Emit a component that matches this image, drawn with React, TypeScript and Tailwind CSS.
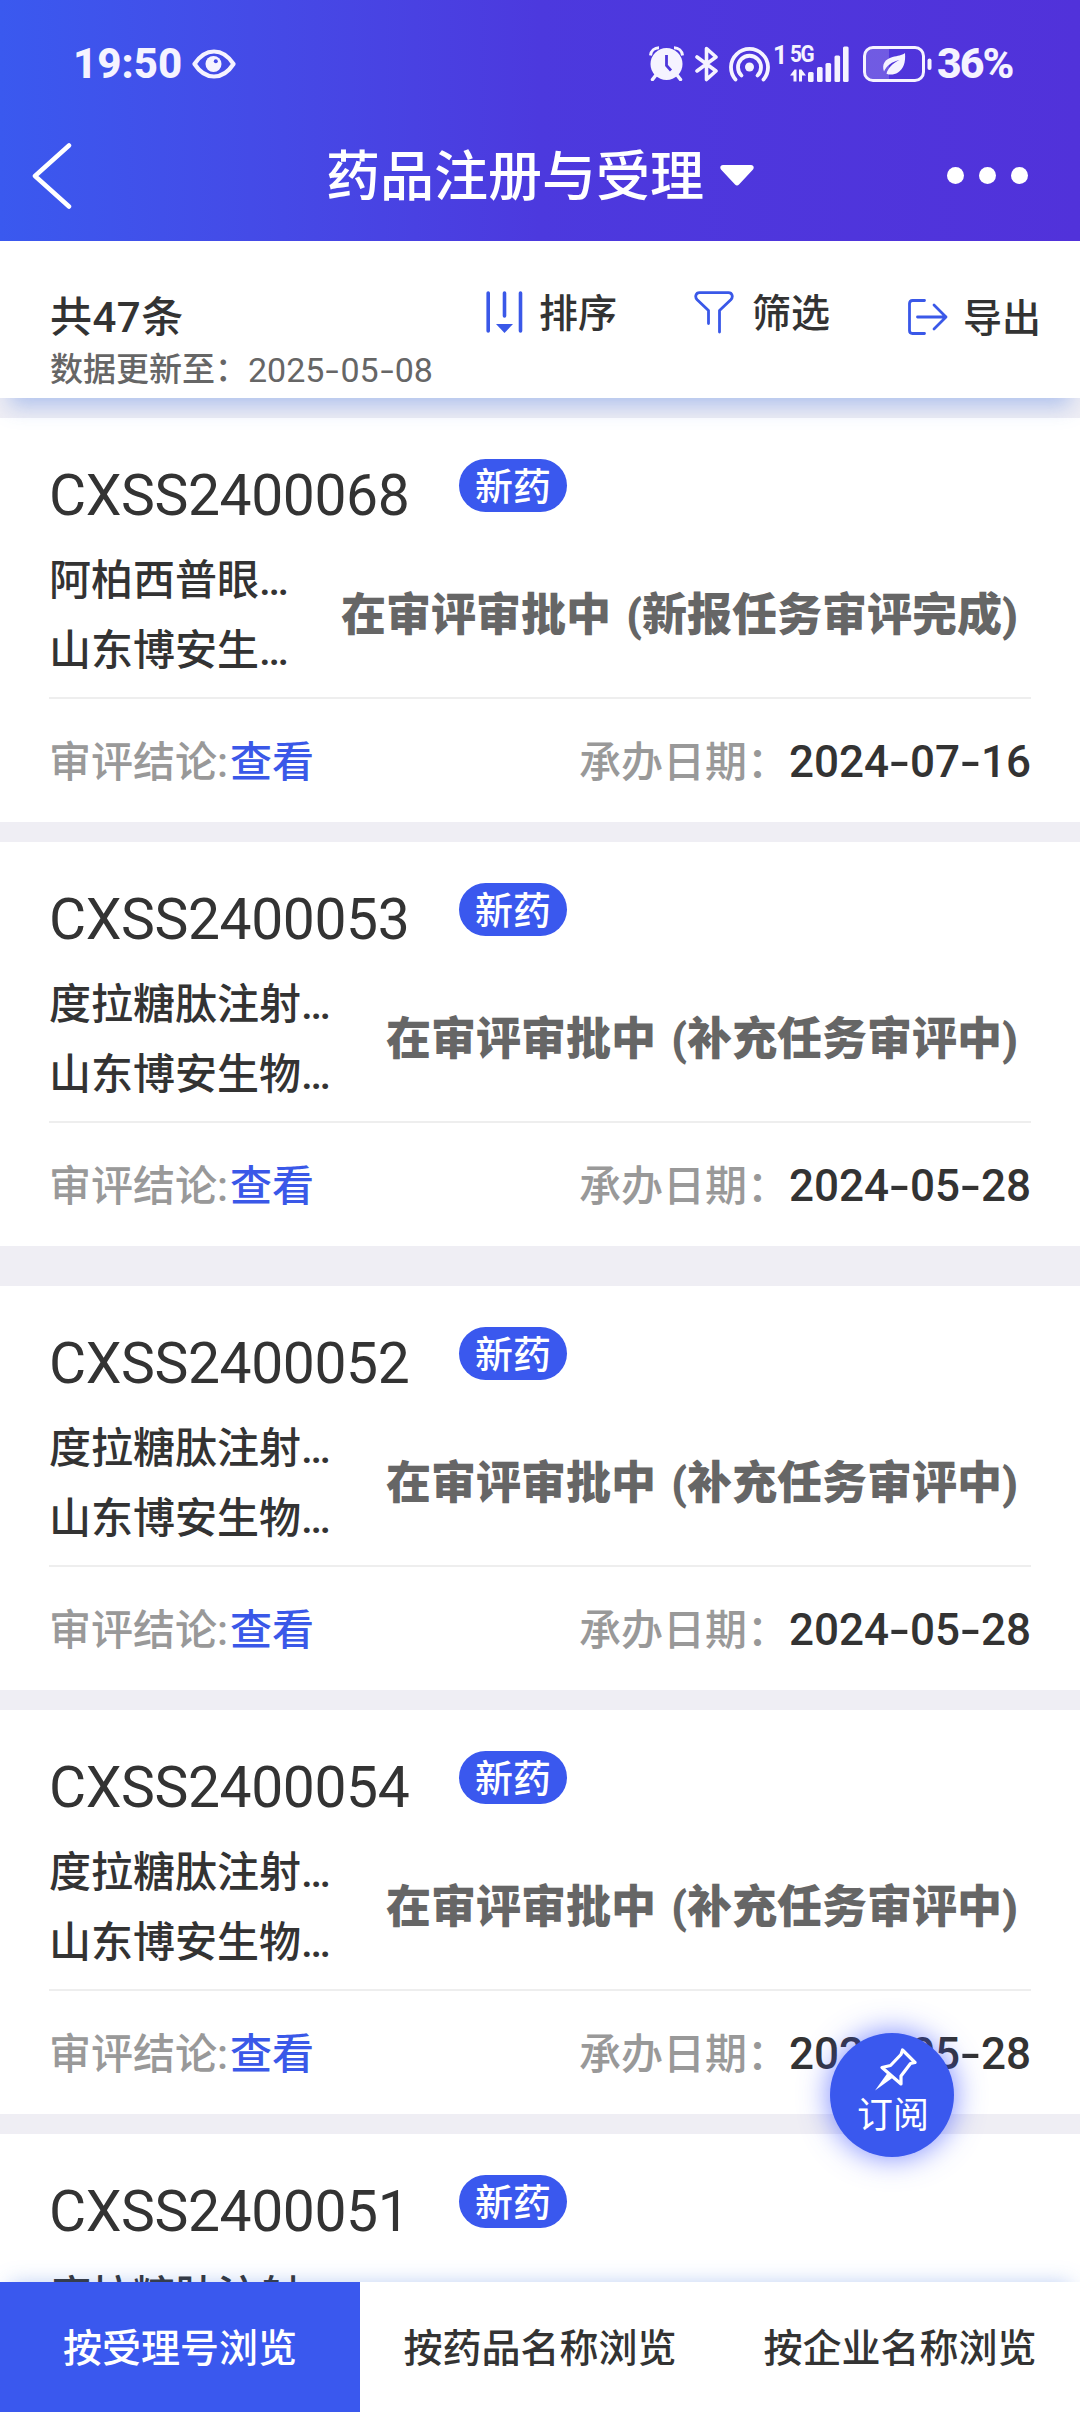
import React from 'react';
import clsx from 'clsx';

type Item = {
  code: string;
  name: string;
  company: string;
  status: string;
  date: string;
};

const items: Item[] = [
  { code: 'CXSS2400068', name: '阿柏西普眼…', company: '山东博安生…', status: '在审评审批中 (新报任务审评完成)', date: '2024-07-16' },
  { code: 'CXSS2400053', name: '度拉糖肽注射…', company: '山东博安生物…', status: '在审评审批中 (补充任务审评中)', date: '2024-05-28' },
  { code: 'CXSS2400052', name: '度拉糖肽注射…', company: '山东博安生物…', status: '在审评审批中 (补充任务审评中)', date: '2024-05-28' },
  { code: 'CXSS2400054', name: '度拉糖肽注射…', company: '山东博安生物…', status: '在审评审批中 (补充任务审评中)', date: '2024-05-28' },
  { code: 'CXSS2400051', name: '度拉糖肽注射…', company: '山东博安生物…', status: '在审评审批中 (补充任务审评中)', date: '2024-05-28' },
];

const tabs = ['按受理号浏览', '按药品名称浏览', '按企业名称浏览'];

function EyeIcon() {
  return (
    <svg width="44" height="30" viewBox="0 0 44 30" fill="none">
      <path d="M2.500 15C8 6.500 14.500 2.500 22 2.500S36 6.500 41.500 15C36 23.500 29.500 27.500 22 27.500S8 23.500 2.500 15Z" stroke="currentColor" strokeWidth="4.200" strokeLinejoin="round" />
      <circle cx="21.500" cy="15" r="8" fill="currentColor" />
      <circle cx="23.800" cy="12.300" r="2" fill="#4349e6" />
    </svg>
  );
}

function AlarmIcon() {
  return (
    <svg width="35" height="35" viewBox="0 0 35 35" fill="none" stroke="currentColor">
      <path d="M1.500 9.500C2 5 5.500 1.800 10 1.800M33.500 9.500C33 5 29.500 1.800 25 1.800" strokeWidth="3" />
      <path d="M7 29 3.500 33.500M28 29l3.500 4.500" strokeWidth="3.500" strokeLinecap="round" />
      <circle cx="17.500" cy="18" r="16" fill="currentColor" stroke="none" />
      <path d="M17.500 9v10.500l4.500 5" stroke="#4e37db" strokeWidth="2.800" />
    </svg>
  );
}

function BluetoothIcon() {
  return (
    <svg width="24" height="36" viewBox="0 0 24 36" fill="none" stroke="currentColor" strokeWidth="3.600" strokeLinejoin="round" strokeLinecap="round">
      <path d="M2 11l19 14-9.500 8.500V2.500L21 11 2 25" />
    </svg>
  );
}

function HotspotIcon() {
  return (
    <svg width="41" height="36" viewBox="0 0 41 36" fill="none" stroke="currentColor" strokeWidth="3.800" strokeLinecap="round">
      <circle cx="20.500" cy="21" r="4.500" fill="currentColor" stroke="none" />
      <path d="M6.500 33.500A18.500 18.500 0 1 1 34.500 33.500" />
      <path d="M12.500 29.500A11.500 11.500 0 1 1 28.500 29.500" />
    </svg>
  );
}

function SignalIcon() {
  return (
    <svg width="60" height="36" viewBox="0 0 60 36" fill="currentColor">
      <path d="M0 29.500 4.500 23.500H6.500V35.500H3.500V29.500zM9 35.500V23.500h2.500l4.500 6h-4v6z" />
      <rect x="18" y="26" width="5.600" height="10" rx="1.500" />
      <rect x="27" y="21" width="5.600" height="15" rx="1.500" />
      <rect x="35.500" y="17" width="5.600" height="19" rx="1.500" />
      <rect x="44.500" y="9.500" width="5.600" height="26.500" rx="1.500" />
      <rect x="53" y="0.500" width="5.600" height="35.500" rx="1.500" />
    </svg>
  );
}

function BatteryIcon() {
  return (
    <svg width="69" height="36" viewBox="0 0 69 36" fill="none">
      <path d="M26 3H10a7 7 0 0 0-7 7v16a7 7 0 0 0 7 7h16z" fill="currentColor" fillOpacity="0.200" />
      <rect x="1.500" y="1.500" width="59" height="33" rx="8.500" stroke="currentColor" strokeWidth="3" />
      <rect x="64.500" y="12.500" width="4" height="11.500" rx="2" fill="currentColor" />
      <path d="M42 7c.8 9.500-1.500 16-7 19.500-4 2.400-8 2.600-11.500 1.200C25 22 29.500 17.500 36.500 14 29 15.500 23.500 20 21 25.500c-2.500-7 1-12.500 8.500-14.500C35 9.700 38.500 9.700 42 7Z" fill="currentColor" />
    </svg>
  );
}

function SortIcon() {
  return (
    <svg width="37" height="42" viewBox="0 0 37 42" fill="none" stroke="#3a58e8" strokeWidth="3.600" strokeLinecap="round">
      <path d="M2.200 2v38M18.500 2v23M34.500 2v38" />
      <path d="M10 33h17l-8.500 9z" fill="#3a58e8" stroke="none" />
    </svg>
  );
}

function FilterIcon() {
  return (
    <svg width="40" height="43" viewBox="0 0 40 43" fill="none" stroke="#3a58e8" strokeWidth="2.800" strokeLinecap="round" strokeLinejoin="round">
      <path d="M14.500 32.500V19.500L3.200 8.800C0.500 6 1.800 1.700 5.500 1.700h29c3.700 0 5 4.300 2.300 7.100L25.500 19.500V41" />
    </svg>
  );
}

function ExportIcon() {
  return (
    <svg width="40" height="36" viewBox="0 0 40 36" fill="none" stroke="#3a58e8" strokeWidth="2.800" strokeLinecap="round" strokeLinejoin="round">
      <path d="M16.500 1.500H4.500c-2 0-3 1-3 3v27c0 2 1 3 3 3h12" />
      <path d="M9.500 18H38M26 6l12 12-12 12" />
    </svg>
  );
}

function PinIcon() {
  return (
    <svg width="42" height="43" viewBox="0 0 42 43" fill="none" stroke="currentColor" strokeWidth="3.200" strokeLinejoin="round">
      <path d="M27.500 2 40 14.500l-4.500 1L26 28v8L7 19.500l8.500-2L26 6.500z" />
      <path d="M12.500 25 0 42.500 18 29.500z" fill="currentColor" stroke="none" />
    </svg>
  );
}

// hyphens get extra room on both sides so the date reads evenly
function DateText({ value, className, dash }: { value: string; className: string; dash: string }) {
  return (
    <span className={clsx('inline-flex', className)}>
      {value.split('-').map((part, i) => (
        <React.Fragment key={i}>
          {i > 0 && <span className={clsx('scale-x-140 text-center', dash)}>-</span>}
          <span>{part}</span>
        </React.Fragment>
      ))}
    </span>
  );
}

function StatusBar() {
  return (
    <div className="flex h-[110px] items-center pl-[73px] pr-[67px] pt-[17px] text-[#f5f3ff]">
      <span className="w-[119px] text-[42px] font-extrabold leading-none">19:50</span>
      <EyeIcon />
      <div className="ml-auto flex items-center">
        <AlarmIcon />
        <span className="ml-[11px]"><BluetoothIcon /></span>
        <span className="ml-[10px]"><HotspotIcon /></span>
        <span className="ml-[3px] h-[36px] w-[17px] text-[25px] font-bold leading-[19px]">1</span>
        <div className="relative">
          <SignalIcon />
          <span className="absolute left-0 top-0 origin-left scale-x-90 text-[23px] font-bold leading-[17px] tracking-[-1.500px]">5G</span>
        </div>
        <span className="ml-[13px]"><BatteryIcon /></span>
        <span className="ml-[5px] w-[76px] text-[43px] font-extrabold leading-none tracking-[-2px]">36%</span>
      </div>
    </div>
  );
}

function Header() {
  return (
    <header className="h-[241px] bg-linear-to-r from-[#3a59ef] via-[#4c39de] to-[#5132da] text-white">
      <StatusBar />
      <div className="flex h-[131px] items-center pl-[32px] pr-[52px]">
        <svg width="42" height="66" viewBox="0 0 42 66" fill="none" stroke="currentColor" strokeWidth="4.500" strokeLinecap="round" strokeLinejoin="round">
          <path d="M37 2.500 3 33l34 30.500" />
        </svg>
        <h1 className="ml-[252px] flex items-center gap-[16px] text-[54px] font-medium leading-none">
          <span className="pt-[5px]">药品注册与受理</span>
          <svg width="34" height="21" viewBox="0 0 34 21" fill="currentColor">
            <path d="M3 0h28c2.500 0 3.500 2.500 2 4.500L19 19.500c-1.200 1.300-2.800 1.300-4 0L1 4.500C-.5 2.500.5 0 3 0Z" />
          </svg>
        </h1>
        <div className="ml-auto flex gap-[15px]">
          {[0, 1, 2].map((i) => (
            <span key={i} className="size-[17px] rounded-full bg-white" />
          ))}
        </div>
      </div>
    </header>
  );
}

function Toolbar() {
  return (
    <div className="relative z-10 flex h-[157px] items-start bg-white text-[#333] shadow-[0_18px_20px_-10px_rgba(70,120,225,0.380)]">
      <div className="w-[436px] pl-[50px] pt-[48px]">
        <div className="text-[42px] font-medium leading-[58px] tracking-[0.500px]">共47条</div>
        <div className="flex whitespace-nowrap text-[33px] font-medium leading-[46px] text-[#666]">
          数据更新至：
          <DateText value="2025-05-08" className="text-[34px] font-normal" dash="w-[16px]" />
        </div>
      </div>
      <div className="flex items-start text-[39px] font-medium leading-[58px]">
        <div className="flex w-[208px] items-start gap-[16px] pl-[50px] pt-[44px]">
          <span className="pt-[6px]"><SortIcon /></span>
          排序
        </div>
        <div className="flex w-[213px] items-start gap-[18px] pl-[50px] pt-[44px]">
          <span className="pt-[6px]"><FilterIcon /></span>
          筛选
        </div>
        <div className="flex items-start gap-[15px] pl-[51px] pt-[49px]">
          <span className="pt-[9px]"><ExportIcon /></span>
          导出
        </div>
      </div>
    </div>
  );
}

function Card({ item }: { item: Item }) {
  return (
    <article className="h-[404px] shrink-0 bg-white px-[49px] text-[#333]">
      <div className="flex h-[126px] items-start">
        <span className="w-[410px] pt-[50px] text-[57px] leading-[56px] tracking-[-0.400px]">{item.code}</span>
        <span className="mt-[41px] flex h-[53px] w-[108px] items-center justify-center rounded-full bg-[#3a58ee] pt-[2px] text-[38px] font-medium leading-none text-white">
          新药
        </span>
      </div>
      <div className="flex h-[153px] items-start justify-between whitespace-nowrap pt-[2px]">
        <div className="text-[42px] font-medium leading-[70px]">
          <p>{item.name}</p>
          <p>{item.company}</p>
        </div>
        <p className="pr-[13px] text-[45px] font-black leading-[140px] text-[#666] [word-spacing:4px]">{item.status}</p>
      </div>
      <div className="flex h-[125px] items-center justify-between border-t-2 border-[#eee] pt-[2px] text-[42px] font-medium text-[#999]">
        <span className="pt-[1px]">
          审评结论<span className="inline-block w-[13px]">:</span><a className="text-[#3a58e8]">查看</a>
        </span>
        <span className="flex items-center">
          <span className="w-[210px] whitespace-nowrap pt-[1px]">承办日期：</span>
          <DateText value={item.date} className="text-[44px] text-[#333]" dash="w-[21px]" />
        </span>
      </div>
    </article>
  );
}

function SubscribeButton() {
  return (
    <button className="absolute left-[830px] top-[2033px] z-20 flex size-[124px] flex-col items-center rounded-full bg-[#3a58ee] pt-[15px] text-white shadow-[0_0_30px_rgba(58,80,255,0.700)]">
      <span className="pl-[8px]"><PinIcon /></span>
      <span className="mt-[6px] pl-[2px] text-[36px] leading-[38px]">订阅</span>
    </button>
  );
}

export default function App() {
  return (
    <div className="relative flex h-[2412px] w-[1080px] flex-col overflow-hidden bg-[#efeef4] font-['Roboto','Noto_Sans_CJK_SC',sans-serif]">
      <Header />
      <Toolbar />
      <main className="flex min-h-0 flex-1 flex-col overflow-hidden pt-5">
        {items.map((item, i) => (
          <div key={item.code} className={clsx('shrink-0', i === 1 ? 'mb-10' : 'mb-5')}>
            <Card item={item} />
          </div>
        ))}
      </main>
      <nav className="z-10 flex h-[130px] shrink-0 bg-white shadow-[0_-8px_20px_-10px_rgba(70,120,225,0.400)]">
        {tabs.map((tab, i) => (
          <button
            key={tab}
            className={clsx(
              'flex-1 whitespace-nowrap pt-[4px] text-[39px] font-medium leading-none',
              i === 0 ? 'bg-[#3a58ee] text-white' : 'text-[#333]'
            )}
          >
            {tab}
          </button>
        ))}
      </nav>
      <SubscribeButton />
    </div>
  );
}
